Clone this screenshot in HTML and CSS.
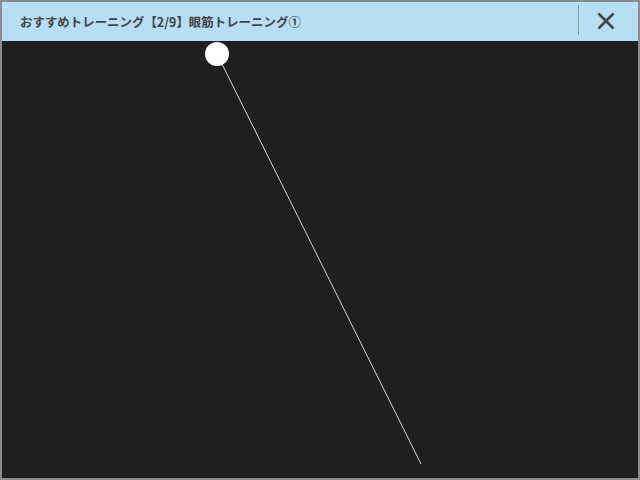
FILE: index.html
```html
<!DOCTYPE html>
<html lang="ja">
<head>
<meta charset="utf-8">
<link rel="stylesheet" href="styles.css">
</head>
<body>
<div class="window">
  <header class="titlebar">
    <h1 class="title">おすすめトレーニング【2/9】眼筋トレーニング①</h1>
    <div class="sep"></div>
    <button class="close" aria-label="閉じる">
      <svg width="18" height="18" viewBox="0 0 18 18"><path d="M1.5 1.5 L16.5 16.5 M16.5 1.5 L1.5 16.5" stroke="#444" stroke-width="2.6" fill="none"/></svg>
    </button>
  </header>
  <main class="canvas">
    <svg class="stage" width="636" height="437" viewBox="0 0 636 437">
      <line x1="215" y1="13" x2="419" y2="423" stroke="#d8d8d8" stroke-width="1"/>
      <circle cx="215" cy="13" r="12" fill="#ffffff"/>
    </svg>
  </main>
</div>
</body>
</html>
```
FILE: styles.css
```css
html, body { margin: 0; padding: 0; background: #8c8c8c; }
.window {
  width: 640px;
  height: 480px;
  box-sizing: border-box;
  border: 2px solid #8c8c8c;
  display: flex;
  flex-direction: column;
  overflow: hidden;
}
.titlebar {
  height: 39px;
  flex: none;
  background: #b6def4;
  display: flex;
  align-items: center;
  padding-left: 18px;
}
.title {
  margin: 0;
  flex: 1;
  font-family: "Noto Sans CJK JP", "Noto Sans", sans-serif;
  font-size: 12.4px;
  font-weight: 700;
  color: #444444;
  letter-spacing: 0.05px;
}
.sep {
  width: 1px;
  height: 30px;
  background: #8a9aa4;
  margin-top: -4px;
}
.close {
  width: 53px;
  height: 39px;
  margin-right: 6px;
  border: 0;
  background: transparent;
  padding: 0;
  display: flex;
  align-items: center;
  justify-content: center;
  position: relative;
  top: -1px;
}
.canvas {
  flex: 1;
  background: #1f1f1f;
  position: relative;
}
.stage { position: absolute; left: 0; top: 0; }
```
